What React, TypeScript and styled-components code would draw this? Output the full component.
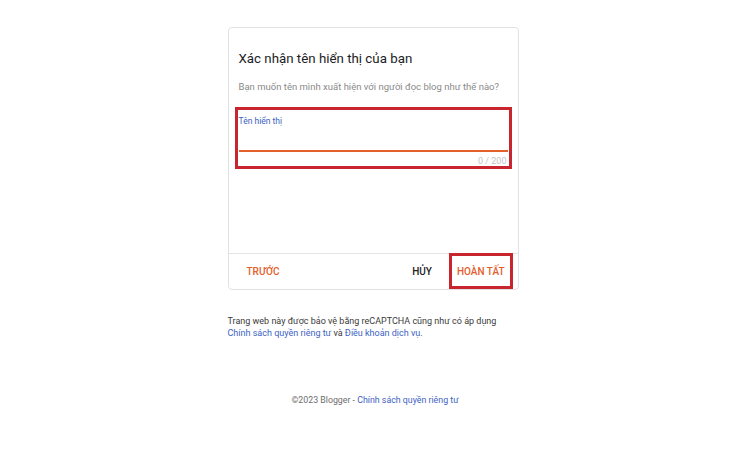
import styled, { createGlobalStyle } from 'styled-components'

const ORANGE = '#e3602b'
const MARK = '#c9252f'
const LINK = '#3d62c2'

const GlobalStyle = createGlobalStyle`
  html, body {
    margin: 0;
    padding: 0;
    background: #fff;
    font-family: Roboto, "Noto Sans", "Liberation Sans", sans-serif;
  }
`

function App() {
  return (
    <Page>
      <GlobalStyle />
      <Card>
        <CardBody>
          <Title>Xác nhận tên hiển thị của bạn</Title>
          <Subtitle>Bạn muốn tên mình xuất hiện với người đọc blog như thế nào?</Subtitle>
          <Field>
            <FieldLabel>Tên hiển thị</FieldLabel>
            <FieldInput aria-label="Tên hiển thị" />
            <Counter>0 / 200</Counter>
            <Mark $top={-4} $right={-4} $bottom={-2} $left={-4} />
          </Field>
        </CardBody>
        <Actions>
          <TextButton $tone="accent">TRƯỚC</TextButton>
          <Spacer />
          <TextButton $tone="plain">HỦY</TextButton>
          <MarkedButton>
            <TextButton $tone="accent">HOÀN TẤT</TextButton>
            <Mark $top={-1} $right={0} $bottom={0} $left={0} />
          </MarkedButton>
        </Actions>
      </Card>
      <Notice>
        Trang web này được bảo vệ bằng reCAPTCHA cũng như có áp dụng
        <br />
        <Link>Chính sách quyền riêng tư</Link> và <Link>Điều khoản dịch vụ</Link>.
      </Notice>
      <Copyright>
        ©2023 Blogger - <Link>Chính sách quyền riêng tư</Link>
      </Copyright>
    </Page>
  )
}

export default App

const Page = styled.div`
  width: 750px;
  height: 449px;
  display: flex;
  flex-direction: column;
  align-items: center;
  padding-top: 27px;
  box-sizing: border-box;
`

const Card = styled.div`
  width: 291px;
  border: 1px solid #e2e2e2;
  border-radius: 4px;
  box-sizing: border-box;
  margin-left: -4px;
`

const CardBody = styled.div`
  height: 225px;
  padding: 21px 10px 0 10px;
  box-sizing: border-box;
`

const Title = styled.div`
  font-size: 13.3px;
  line-height: 20px;
  color: #202124;
`

const Subtitle = styled.div`
  margin-top: 10px;
  font-size: 9.5px;
  line-height: 16px;
  color: #8a8a8a;
  white-space: nowrap;
`

const Field = styled.div`
  position: relative;
  margin-top: 16px;
  display: flex;
  flex-direction: column;
  padding: 4px 0 0 0;
`

const FieldLabel = styled.div`
  font-size: 8.5px;
  line-height: 12px;
  color: ${LINK};
`

const FieldInput = styled.input`
  border: none;
  border-bottom: 2px solid ${ORANGE};
  outline: none;
  height: 20px;
  padding: 0;
  margin: 3px 0 0 0;
  background: transparent;
  font: inherit;
`

const Counter = styled.div`
  align-self: flex-end;
  margin-top: 3px;
  margin-right: 1px;
  font-size: 9px;
  line-height: 12px;
  color: #c4c4c4;
`

const Mark = styled.span<{ $top: number; $right: number; $bottom: number; $left: number }>`
  position: absolute;
  top: ${({ $top }) => $top}px;
  right: ${({ $right }) => $right}px;
  bottom: ${({ $bottom }) => $bottom}px;
  left: ${({ $left }) => $left}px;
  border: 3px solid ${MARK};
  pointer-events: none;
`

const Actions = styled.div`
  display: flex;
  align-items: center;
  height: 35px;
  border-top: 1px solid #e4e4e4;
  padding: 0 5px 0 10px;
`

const Spacer = styled.div`
  flex: 1;
`

const TextButton = styled.button<{ $tone: 'accent' | 'plain' }>`
  border: none;
  background: transparent;
  padding: 0 8px;
  height: 35px;
  font-family: inherit;
  font-size: 10px;
  font-weight: 500;
  color: ${({ $tone }) => ($tone === 'accent' ? ORANGE : '#222')};
  cursor: pointer;
`

const MarkedButton = styled.div`
  position: relative;
  display: flex;
  margin-left: 9px;
`

const Notice = styled.div`
  width: 291px;
  margin-top: 25px;
  margin-left: -4px;
  font-size: 9px;
  line-height: 12px;
  color: #3a3a3a;
`

const Link = styled.span`
  color: ${LINK};
`

const Copyright = styled.div`
  margin-top: 55px;
  font-size: 8.8px;
  line-height: 12px;
  color: #6d6d6d;
`
